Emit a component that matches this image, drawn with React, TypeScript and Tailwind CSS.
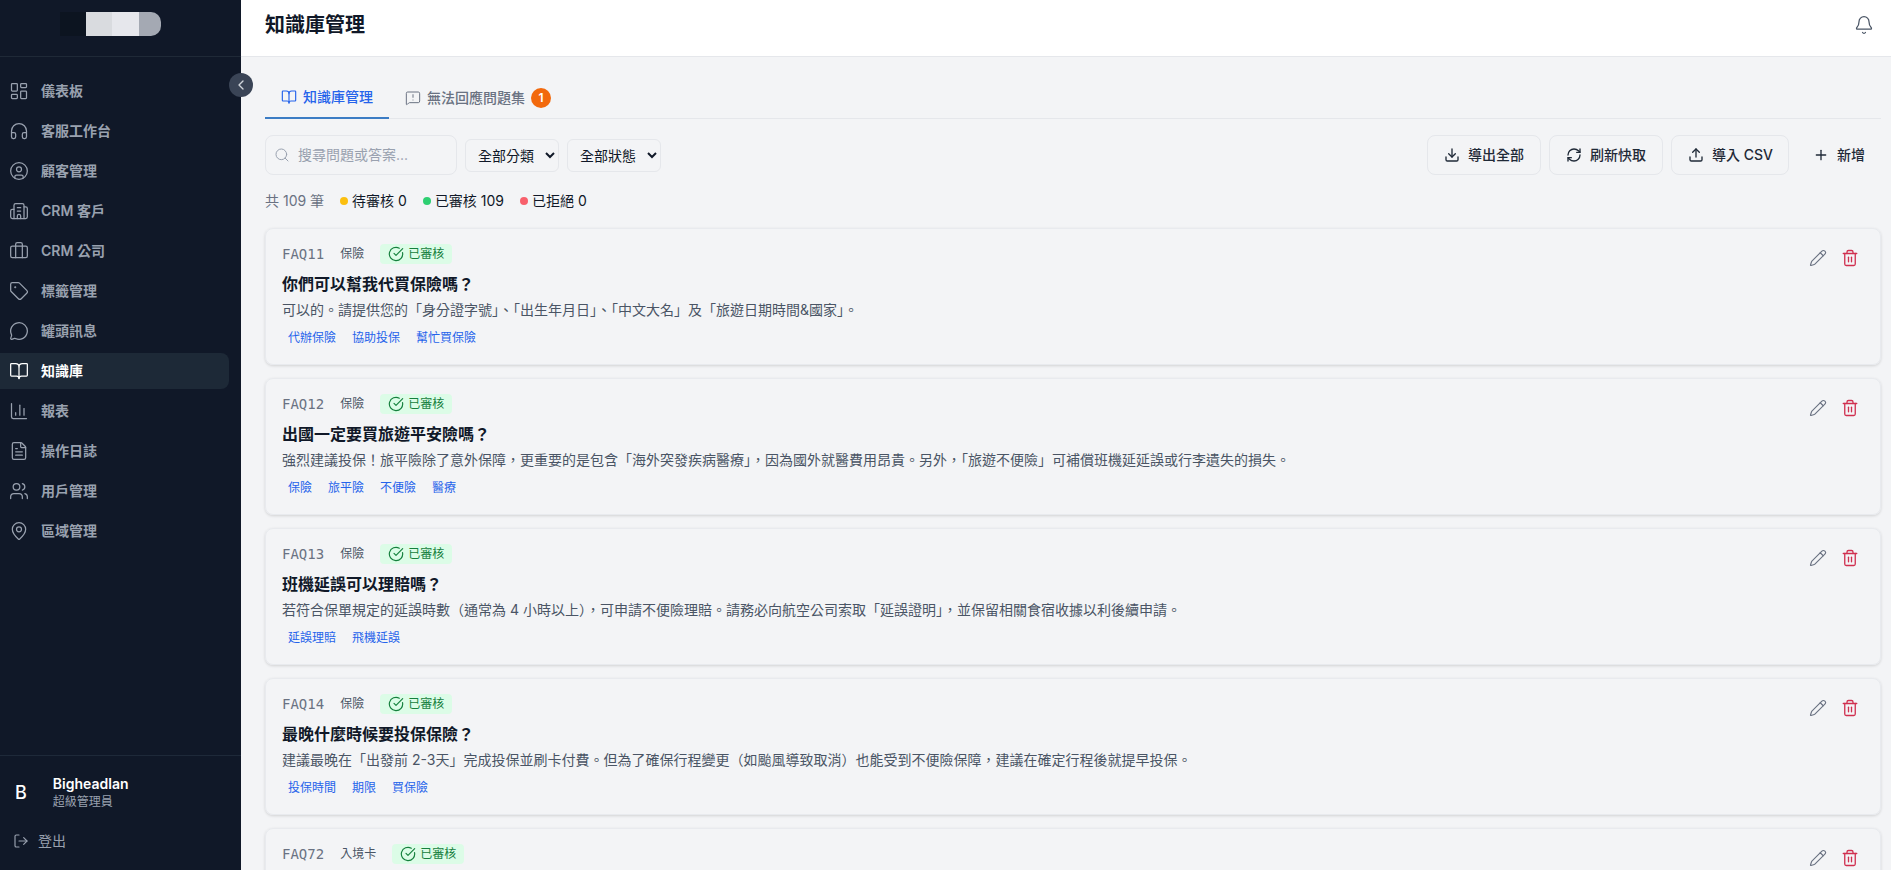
import {
  Bell,
  BookOpen,
  Briefcase,
  Building2,
  ChartColumn,
  ChevronLeft,
  CircleCheckBig,
  CircleUser,
  Download,
  FileText,
  Headphones,
  LayoutDashboard,
  LogOut,
  MapPin,
  MessageCircle,
  MessageSquareWarning,
  Pencil,
  Plus,
  RefreshCw,
  Search,
  Tag,
  Trash2,
  Upload,
  Users,
} from "lucide-react";

const navItems = [
  { label: "儀表板", icon: LayoutDashboard },
  { label: "客服工作台", icon: Headphones },
  { label: "顧客管理", icon: CircleUser },
  { label: "CRM 客戶", icon: Building2 },
  { label: "CRM 公司", icon: Briefcase },
  { label: "標籤管理", icon: Tag },
  { label: "罐頭訊息", icon: MessageCircle },
  { label: "知識庫", icon: BookOpen, active: true },
  { label: "報表", icon: ChartColumn },
  { label: "操作日誌", icon: FileText },
  { label: "用戶管理", icon: Users },
  { label: "區域管理", icon: MapPin },
];

const faqs = [
  {
    id: "FAQ11",
    category: "保險",
    question: "你們可以幫我代買保險嗎？",
    answer: "可以的。請提供您的「身分證字號」、「出生年月日」、「中文大名」及「旅遊日期時間&國家」。",
    tags: ["代辦保險", "協助投保", "幫忙買保險"],
  },
  {
    id: "FAQ12",
    category: "保險",
    question: "出國一定要買旅遊平安險嗎？",
    answer:
      "強烈建議投保！旅平險除了意外保障，更重要的是包含「海外突發疾病醫療」，因為國外就醫費用昂貴。另外，「旅遊不便險」可補償班機延延誤或行李遺失的損失。",
    tags: ["保險", "旅平險", "不便險", "醫療"],
  },
  {
    id: "FAQ13",
    category: "保險",
    question: "班機延誤可以理賠嗎？",
    answer:
      "若符合保單規定的延誤時數（通常為 4 小時以上），可申請不便險理賠。請務必向航空公司索取「延誤證明」，並保留相關食宿收據以利後續申請。",
    tags: ["延誤理賠", "飛機延誤"],
  },
  {
    id: "FAQ14",
    category: "保險",
    question: "最晚什麼時候要投保保險？",
    answer:
      "建議最晚在「出發前 2-3天」完成投保並刷卡付費。但為了確保行程變更（如颱風導致取消）也能受到不便險保障，建議在確定行程後就提早投保。",
    tags: ["投保時間", "期限", "買保險"],
  },
  {
    id: "FAQ72",
    category: "入境卡",
    question: "",
    answer: "",
    tags: [],
  },
];

function Sidebar() {
  return (
    <aside className="relative z-10 flex h-full w-[241px] shrink-0 flex-col bg-[#101828]">
      <div className="flex h-[57px] shrink-0 items-start justify-center border-b border-[#1f2937] pr-5 pt-3">
        <div className="flex h-6 w-[101px]">
          <div className="w-[26px] bg-[#0c1420]" />
          <div className="w-[26px] bg-[#d9dbdf]" />
          <div className="w-[27px] bg-[#e6e7ec]" />
          <div className="w-[22px] rounded-r-[10px] bg-[#a4a9b3]" />
        </div>
      </div>
      <button className="absolute left-[229px] top-[73px] flex size-6 items-center justify-center rounded-full bg-[#3a4456] text-[#d1d5db]">
        <ChevronLeft className="size-4" />
      </button>
      <nav className="flex flex-1 flex-col gap-1 pr-3 pt-4">
        {navItems.map((item) => {
          const Icon = item.icon;
          return (
            <div
              key={item.label}
              className={
                item.active
                  ? "flex h-9 items-center gap-[12px] rounded-r-lg bg-[#1d2937] pl-[9px] text-sm font-semibold text-white"
                  : "flex h-9 items-center gap-[12px] pl-[9px] text-sm font-semibold text-[#99a1af]"
              }
            >
              <Icon className="size-5" strokeWidth={1.5} />
              {item.label}
            </div>
          );
        })}
      </nav>
      <div className="h-[115px] shrink-0 border-t border-[#1e2939]">
        <div className="flex items-center gap-[26px] pl-[15px] pt-[19px]">
          <span className="text-lg font-medium text-white">B</span>
          <div>
            <div className="text-sm leading-[18px] font-semibold text-white">Bigheadlan</div>
            <div className="mt-px text-xs leading-4 text-[#99a1af]">超級管理員</div>
          </div>
        </div>
        <div className="mt-[21px] flex items-center gap-[9px] pl-[13px] text-sm text-[#99a1af]">
          <LogOut className="size-4" strokeWidth={1.75} />
          登出
        </div>
      </div>
    </aside>
  );
}

function Tabs() {
  return (
    <div className="flex h-[46px] border-b border-[#e5e7eb] pt-1">
      <div className="-mb-px flex items-center gap-[6px] border-b-2 border-[#3b7cc4] px-4 text-sm font-medium text-[#2563eb]">
        <BookOpen className="size-4" strokeWidth={1.75} />
        知識庫管理
      </div>
      <div className="flex items-center px-4 text-sm font-medium text-[#6a7282]">
        <MessageSquareWarning className="mr-[6px] size-4" strokeWidth={1.5} />
        無法回應問題集
        <span className="ml-[6px] flex size-5 items-center justify-center rounded-full bg-[#f2690d] text-xs font-semibold text-white">
          1
        </span>
      </div>
    </div>
  );
}

function Toolbar() {
  const selectClass =
    "h-[33px] w-[94px] rounded-md border border-[#e5e7eb] bg-transparent pl-2 text-sm text-[#101828]";
  const buttonClass =
    "flex h-10 items-center gap-2 rounded-lg border border-[#e5e7eb] px-4 text-sm font-medium text-[#1f2937]";
  return (
    <div className="mt-4 flex items-center justify-between">
      <div className="flex items-center gap-2">
        <div className="flex h-10 w-[192px] items-center gap-2 rounded-lg border border-[#e5e7eb] pl-2 text-sm text-[#99a1af]">
          <Search className="size-4" strokeWidth={1.5} />
          搜尋問題或答案...
        </div>
        <select className={selectClass}>
          <option>全部分類</option>
        </select>
        <select className={selectClass}>
          <option>全部狀態</option>
        </select>
      </div>
      <div className="flex items-center gap-2">
        <button className={buttonClass}>
          <Download className="size-4" />
          導出全部
        </button>
        <button className={buttonClass}>
          <RefreshCw className="size-4" />
          刷新快取
        </button>
        <button className="flex h-10 items-center gap-2 rounded-lg border border-[#e5e7eb] pl-4 pr-[15px] text-sm font-medium text-[#1f2937]">
          <Upload className="size-4" />
          導入 CSV
        </button>
        <button className="flex h-10 items-center gap-2 px-4 text-sm font-medium text-[#1f2937]">
          <Plus className="size-4" />
          新增
        </button>
      </div>
    </div>
  );
}

function Stats() {
  return (
    <div className="mt-4 flex h-5 items-center text-sm text-[#101828]">
      <span className="mr-4 text-[#6a7282]">共 109 筆</span>
      <span className="mr-[6px] flex items-center gap-1">
        <i className="size-2 rounded-full bg-[#fbbf0f]" />
        待審核 0
      </span>
      <span className="ml-[10px] mr-[6px] flex items-center gap-1">
        <i className="size-2 rounded-full bg-[#2ecf72]" />
        已審核 109
      </span>
      <span className="ml-[10px] flex items-center gap-1">
        <i className="size-2 rounded-full bg-[#f8606c]" />
        已拒絕 0
      </span>
    </div>
  );
}

function FaqCard({ faq }: { faq: (typeof faqs)[number] }) {
  return (
    <div className="h-[137px] shrink-0 rounded-lg border border-[#e8eaee] px-4 pt-[15px] shadow-[0_1px_3px_rgba(0,0,0,0.14)]">
      <div className="flex items-start justify-between">
        <div className="min-w-0">
          <div className="flex h-5 items-center">
            <span className="font-['DejaVu_Sans_Mono',monospace] text-sm text-[#6a7282]">{faq.id}</span>
            <span className="ml-4 text-xs text-[#4a5565]">{faq.category}</span>
            <span className="ml-4 flex h-5 items-center gap-1 rounded bg-[#dcfce7] px-2 text-xs text-[#15803d]">
              <CircleCheckBig className="size-4" strokeWidth={1.75} />
              已審核
            </span>
          </div>
          <h3 className="mt-2 text-base leading-6 font-semibold text-[#101828]">{faq.question}</h3>
          <p className="mt-1 text-sm leading-5 text-[#4a5565]">{faq.answer}</p>
          <div className="mt-2 flex gap-1">
            {faq.tags.map((tag) => (
              <span key={tag} className="flex h-5 items-center rounded px-1.5 text-xs text-[#2563eb]">
                {tag}
              </span>
            ))}
          </div>
        </div>
        <div className="-mr-[2px] -mt-[2px] flex shrink-0">
          <button className="flex size-8 items-center justify-center text-[#6a7282]">
            <Pencil className="size-[18px]" strokeWidth={1.5} />
          </button>
          <button className="flex size-8 items-center justify-center text-[#d0304f]">
            <Trash2 className="size-[18px]" strokeWidth={1.75} />
          </button>
        </div>
      </div>
    </div>
  );
}

export default function App() {
  return (
    <div className="flex h-screen w-full overflow-hidden bg-[#f3f4f6] font-['Inter','Noto_Sans_CJK_TC',sans-serif]">
      <Sidebar />
      <div className="flex min-w-0 flex-1 flex-col">
        <header className="flex h-[57px] shrink-0 items-center justify-between border-b border-[#e5e7eb] bg-white pb-[6px] pl-6 pr-[17px]">
          <h1 className="text-xl font-semibold text-[#101828]">知識庫管理</h1>
          <Bell className="size-5 text-[#4a5565]" strokeWidth={1.5} />
        </header>
        <main className="min-h-0 flex-1 overflow-hidden pl-6 pr-[10px] pt-4">
          <Tabs />
          <Toolbar />
          <Stats />
          <div className="mt-[17px] flex flex-col gap-[13px]">
            {faqs.map((faq) => (
              <FaqCard key={faq.id} faq={faq} />
            ))}
          </div>
        </main>
      </div>
    </div>
  );
}
